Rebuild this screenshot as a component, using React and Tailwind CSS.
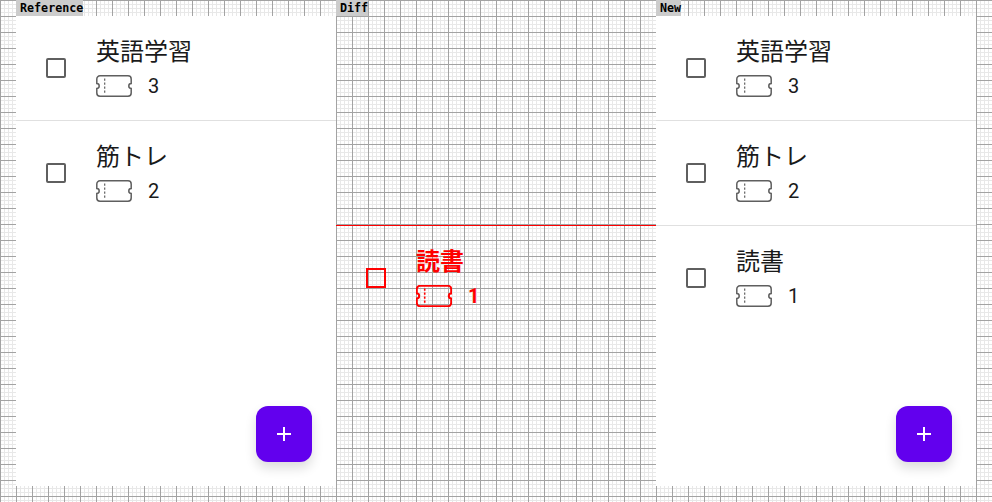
import React from "react";

const rows = [
  { title: "英語学習", count: 3 },
  { title: "筋トレ", count: 2 },
];

const cjk = "font-['Noto_Sans_CJK_JP','Noto_Sans',sans-serif]";

function Ticket({ color, heavy }) {
  return (
    <svg width="36" height="22" viewBox="0 0 36 22" fill="none" stroke={color} strokeWidth={heavy ? 2 : 1.5}>
      <path d="M4 0.8H32a3.2 3.2 0 0 1 3.2 3.2V8.6a2.4 2.4 0 0 0 0 4.8V18a3.2 3.2 0 0 1-3.2 3.2H4A3.2 3.2 0 0 1 0.8 18V13.4a2.4 2.4 0 0 0 0-4.8V4A3.2 3.2 0 0 1 4 0.8Z" />
      <path d="M8.7 3.5V19.5" strokeWidth={heavy ? 1.6 : 1.2} strokeDasharray="2.2 1.8" />
    </svg>
  );
}

function Row({ title, count, diff, divider }) {
  return (
    <div className={`flex h-[105px] items-center border-b pl-[30px] ${!divider ? "border-transparent" : diff ? "border-[#ff0000]" : "border-[#e0e0e0]"}`}>
      <div className={`h-5 w-5 border-2 ${diff ? "border-[#ff0000]" : "rounded-[2px] border-[#5f5f5f]"}`} />
      <div className={`ml-[30px] flex flex-col pb-[6px] ${diff ? "text-[#ff0000]" : "text-[#1a1a1a]"}`}>
        <div className={`-mt-px h-9 text-2xl leading-9 ${cjk} ${diff ? "font-bold" : ""}`}>{title}</div>
        <div className="mt-[7px] flex h-[22px] items-center gap-4">
          <Ticket color={diff ? "#ff0000" : "#5f5f5f"} heavy={diff} />
          <span className={`font-['Roboto',sans-serif] text-xl leading-[22px] ${diff ? "font-bold" : ""}`}>{count}</span>
        </div>
      </div>
    </div>
  );
}

function Fab() {
  return (
    <button className="mt-auto mr-6 mb-6 flex h-14 w-14 items-center justify-center self-end rounded-xl bg-[#6200ee] shadow-[0_6px_12px_rgba(0,0,0,0.14)]">
      <svg width="24" height="24" viewBox="0 0 24 24" fill="#ffffff">
        <path d="M19 13h-6v6h-2v-6H5v-2h6V5h2v6h6v2z" />
      </svg>
    </button>
  );
}

function Column({ label, children, white }) {
  return (
    <div className="flex w-80 flex-col">
      <div className="h-4">
        <span className="block h-4 w-fit bg-[#cccccc] pl-1 font-['DejaVu_Sans_Mono',monospace] text-[11.7px] leading-4 font-bold text-black">
          {label}
        </span>
      </div>
      <div className={`flex h-[470px] flex-col ${white ? "bg-white" : ""}`}>{children}</div>
    </div>
  );
}

export default function App() {
  return (
    <div className="flex h-[502px] w-[992px] overflow-hidden bg-white bg-[linear-gradient(to_right,#a3a3a3_1px,transparent_1px),linear-gradient(to_bottom,#a3a3a3_1px,transparent_1px),linear-gradient(to_right,#e8e8e8_1px,transparent_1px),linear-gradient(to_bottom,#e8e8e8_1px,transparent_1px)] bg-[size:16px_16px,16px_16px,4px_4px,4px_4px] pl-4">
      <Column label="Reference" white>
        {rows.map((r, i) => (
          <Row key={r.title} {...r} divider={i === 0} />
        ))}
        <Fab />
      </Column>
      <Column label="Diff">
        <div className="h-[105px]" />
        <div className="h-[105px] border-b border-[#ff0000]" />
        <Row title="読書" count={1} diff />
      </Column>
      <Column label="New" white>
        {rows.map((r) => (
          <Row key={r.title} {...r} divider />
        ))}
        <Row title="読書" count={1} />
        <Fab />
      </Column>
    </div>
  );
}
